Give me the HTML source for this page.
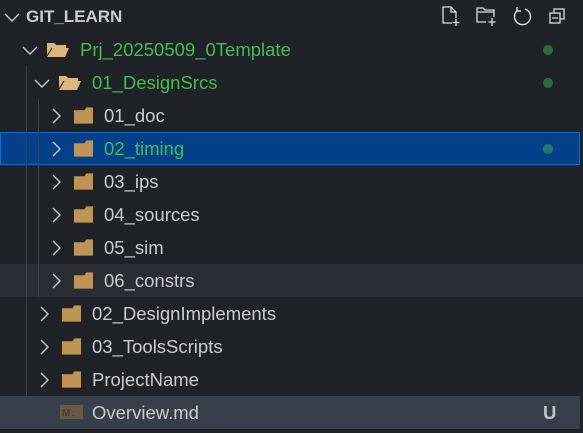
<!DOCTYPE html><html><head><style>
body{margin:0;width:583px;height:433px;background:#1f2226;font-family:"Liberation Sans",sans-serif;overflow:hidden;position:relative}
.r{position:absolute;left:0;width:583px;height:33px;color:#cccccc;font-size:18.5px;line-height:33px}
.t{position:absolute;top:0}
.g{color:#3fbf4f}
.ch{position:absolute;top:9px}
.fd{position:absolute;top:8px}
.dot{position:absolute;left:543px;top:12px;width:10px;height:10px;border-radius:50%;background:#2b6e3b}
.guide{position:absolute;width:1px;background:#3c3f44}
</style></head><body>
<svg width="0" height="0" style="position:absolute"><defs>
<symbol id="cr" viewBox="0 0 10 16"><path d="M2 1l7 7-7 7" fill="none" stroke="#ccc" stroke-width="1.4"/></symbol>
<symbol id="cd" viewBox="0 0 16 10"><path d="M1 2l7 7 7-7" fill="none" stroke="#ccc" stroke-width="1.4"/></symbol>
<symbol id="fc" viewBox="0 0 20 17"><path d="M0 3h20v14H0z" fill="#c09553"/><path d="M11 3l2-3h7v4z" fill="#c09553"/></symbol>
<symbol id="fo" viewBox="0 0 22 16"><path d="M0 2h7l2 2h10v3H5L0 15z" fill="#dcb67a"/><path d="M5 7h17l-4 9H0z" fill="#dcb67a"/><path d="M5 7l-5 8" stroke="#1f2226" stroke-width="1"/></symbol>
</defs></svg>
<div class="r" style="top:132px;background:#04408a;outline:1px solid #0a6fd0;outline-offset:-1px;width:580px"></div>
<div class="r" style="top:264px;background:#2a2d33"></div>
<div class="r" style="top:396px;background:#37404a;width:580px"></div>
<div class="guide" style="left:26px;top:66px;height:330px"></div>
<div class="guide" style="left:38px;top:99px;height:198px"></div>

<div class="r" style="top:0"><svg class="ch" style="left:4px;top:12px" width="16" height="10"><use href="#cd"/></svg><span class="t" style="left:26px;font-weight:bold;font-size:17px">GIT_LEARN</span>
<svg style="position:absolute;left:440px;top:5px" width="22" height="22" viewBox="0 0 22 22" fill="none" stroke="#ddd" stroke-width="1.3"><path d="M12 18H3V2h8l5 5v6M11 2v5h5M16 14v7M12.5 17.5h7"/></svg>
<svg style="position:absolute;left:475px;top:5px" width="24" height="22" viewBox="0 0 24 22" fill="none" stroke="#ddd" stroke-width="1.3"><path d="M11 17H2V3h6l2 2h9v7M2 7h17M17 13v8M13.5 17h7"/></svg>
<svg style="position:absolute;left:511px;top:5px" width="22" height="22" viewBox="0 0 22 22" fill="none" stroke="#ddd" stroke-width="1.4"><path d="M7 5A8 8 0 1 0 14 4M6 2v4h4"/></svg>
<svg style="position:absolute;left:547px;top:5px" width="22" height="22" viewBox="0 0 22 22" fill="none" stroke="#ddd" stroke-width="1.3"><rect x="3" y="8" width="10" height="10"/><path d="M7 8V4h10v10h-4M5 13h6"/></svg></div>

<div class="r" style="top:33px"><svg class="ch" style="left:22px;top:12px" width="16" height="10"><use href="#cd"/></svg><svg class="fd" style="left:47px" width="22" height="16"><use href="#fo"/></svg><span class="t g" style="left:80px">Prj_20250509_0Template</span><div class="dot"></div></div>
<div class="r" style="top:66px"><svg class="ch" style="left:34px;top:12px" width="16" height="10"><use href="#cd"/></svg><svg class="fd" style="left:59px" width="22" height="16"><use href="#fo"/></svg><span class="t g" style="left:92px">01_DesignSrcs</span><div class="dot"></div></div>
<div class="r" style="top:99px"><svg class="ch" style="left:51px" width="10" height="16"><use href="#cr"/></svg><svg class="fd" style="left:74px" width="19" height="17"><use href="#fc"/></svg><span class="t" style="left:104px">01_doc</span></div>
<div class="r" style="top:132px"><svg class="ch" style="left:51px" width="10" height="16"><use href="#cr"/></svg><svg class="fd" style="left:74px" width="19" height="17"><use href="#fc"/></svg><span class="t g" style="left:104px">02_timing</span><div class="dot" style="background:#1d7a6c"></div></div>
<div class="r" style="top:165px"><svg class="ch" style="left:51px" width="10" height="16"><use href="#cr"/></svg><svg class="fd" style="left:74px" width="19" height="17"><use href="#fc"/></svg><span class="t" style="left:104px">03_ips</span></div>
<div class="r" style="top:198px"><svg class="ch" style="left:51px" width="10" height="16"><use href="#cr"/></svg><svg class="fd" style="left:74px" width="19" height="17"><use href="#fc"/></svg><span class="t" style="left:104px">04_sources</span></div>
<div class="r" style="top:231px"><svg class="ch" style="left:51px" width="10" height="16"><use href="#cr"/></svg><svg class="fd" style="left:74px" width="19" height="17"><use href="#fc"/></svg><span class="t" style="left:104px">05_sim</span></div>
<div class="r" style="top:264px"><svg class="ch" style="left:51px" width="10" height="16"><use href="#cr"/></svg><svg class="fd" style="left:74px" width="19" height="17"><use href="#fc"/></svg><span class="t" style="left:104px">06_constrs</span></div>
<div class="r" style="top:297px"><svg class="ch" style="left:39px" width="10" height="16"><use href="#cr"/></svg><svg class="fd" style="left:62px" width="19" height="17"><use href="#fc"/></svg><span class="t" style="left:92px">02_DesignImplements</span></div>
<div class="r" style="top:330px"><svg class="ch" style="left:39px" width="10" height="16"><use href="#cr"/></svg><svg class="fd" style="left:62px" width="19" height="17"><use href="#fc"/></svg><span class="t" style="left:92px">03_ToolsScripts</span></div>
<div class="r" style="top:363px"><svg class="ch" style="left:39px" width="10" height="16"><use href="#cr"/></svg><svg class="fd" style="left:62px" width="19" height="17"><use href="#fc"/></svg><span class="t" style="left:92px">ProjectName</span></div>
<div class="r" style="top:396px"><svg style="position:absolute;left:60px;top:9px" width="23" height="14" viewBox="0 0 23 14"><rect width="23" height="14" fill="#6b5a3e"/><text x="2" y="11" font-size="10" font-weight="bold" fill="#37404a" font-family="Liberation Sans">M↓</text></svg><span class="t" style="left:92px">Overview.md</span><span class="t" style="left:543px;font-weight:bold;color:#c0c4c8">U</span></div>
</body></html>
